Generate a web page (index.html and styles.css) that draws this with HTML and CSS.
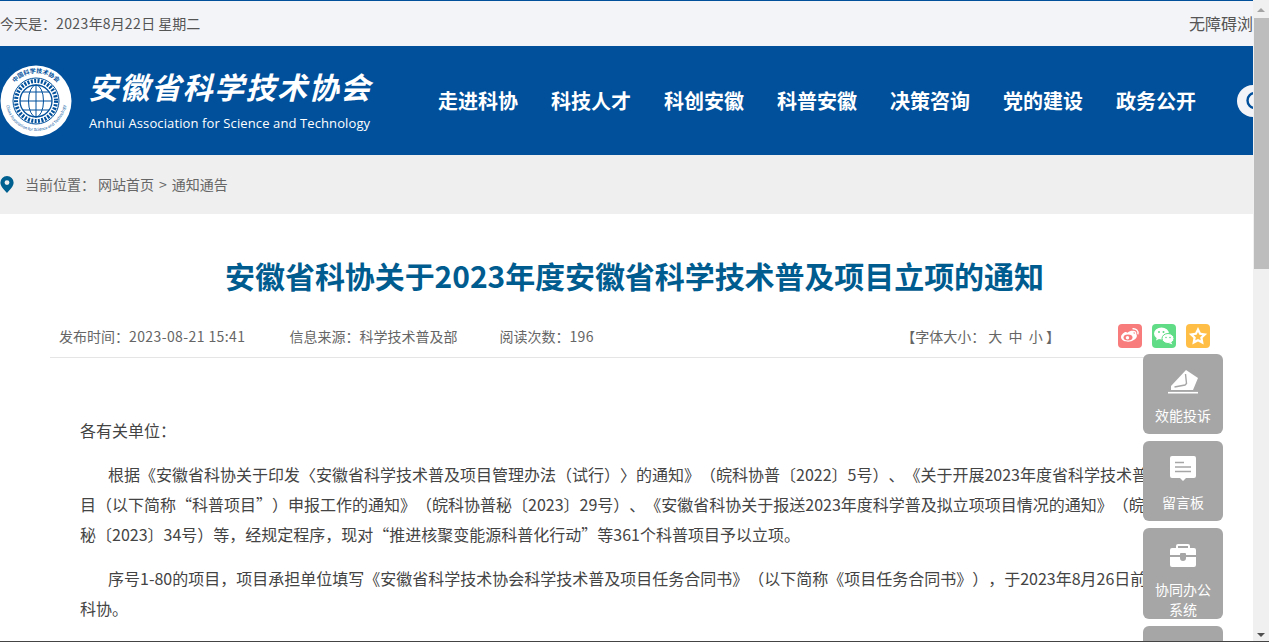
FILE: index.html
```html
<!DOCTYPE html>
<html lang="zh-CN">
<head>
<meta charset="utf-8">
<title>安徽省科协关于2023年度安徽省科学技术普及项目立项的通知</title>
<link rel="stylesheet" href="styles.css">
</head>
<body>
<div class="window">
  <div class="page">
    <div class="topbar">
      <span class="date">今天是：<span class="num">2023</span>年<span class="num">8</span>月<span class="num">22</span>日 星期二</span>
      <span class="access">无障碍浏览</span>
    </div>
    <header class="header">
      <div class="brand">
        <svg class="emblem" width="72" height="72" viewBox="0 0 72 72">
          <circle cx="36" cy="36" r="35.5" fill="#fff"/>
          <circle cx="36" cy="36" r="23" fill="none" stroke="#00509c" stroke-width="1"/>
          <circle cx="36" cy="36" r="20" fill="none" stroke="#00509c" stroke-width="4" stroke-dasharray="2 1.4"/>
          <circle cx="36" cy="36" r="16" fill="#fff" stroke="#00509c" stroke-width="1.3"/>
          <ellipse cx="36" cy="36" rx="7.5" ry="16" fill="none" stroke="#00509c"/>
          <path d="M36 20v32M20 36h32M23 27h26M23 45h26" stroke="#00509c" fill="none"/>
          <path id="ringtop" d="M8 36a28 28 0 0 1 56 0" fill="none"/>
          <text class="emblem-cn"><textPath href="#ringtop" startOffset="50%" text-anchor="middle">中国科学技术协会</textPath></text>
          <path id="ringbot" d="M6 36a30 30 0 0 0 60 0" fill="none"/>
          <text class="emblem-en"><textPath href="#ringbot" startOffset="50%" text-anchor="middle">China Association for Science and Technology</textPath></text>
        </svg>
        <div class="brand-text">
          <div class="brand-cn">安徽省科学技术协会</div>
          <div class="brand-en">Anhui Association for Science and Technology</div>
        </div>
      </div>
      <nav class="nav">
        <a>走进科协</a><a>科技人才</a><a>科创安徽</a><a>科普安徽</a><a>决策咨询</a><a>党的建设</a><a>政务公开</a>
      </nav>
      <div class="search">
        <svg width="46" height="32" viewBox="0 0 46 32"><circle cx="16" cy="16" r="16" fill="#f3f4f8"/><circle cx="18" cy="15.500" r="7.500" fill="none" stroke="#00509c" stroke-width="2.400"/></svg>
      </div>
    </header>
    <div class="crumbs">
      <svg class="pin" width="14" height="17" viewBox="0 0 14 18"><path fill-rule="evenodd" fill="#00608f" d="M7 0a7 7 0 0 1 7 7c0 4-4 8-7 11C4 15 0 11 0 7a7 7 0 0 1 7-7zm0 4.400a2.600 2.600 0 1 0 0 5.200 2.600 2.600 0 0 0 0-5.200z"/></svg>
      <span class="crumb-label">当前位置：</span>
      <span>网站首页</span><span class="sep">&gt;</span><span>通知通告</span>
    </div>
    <main class="article">
      <h1 class="title">安徽省科协关于2023年度安徽省科学技术普及项目立项的通知</h1>
      <div class="meta">
        <span class="meta-a">发布时间：<span class="num-wide">2023-08-21 15:41</span></span>
        <span class="meta-b">信息来源：科学技术普及部</span>
        <span class="meta-c">阅读次数：<span class="num-wide">196</span></span>
        <span class="fontsize">【字体大小：&nbsp;大&nbsp;&nbsp;中&nbsp;&nbsp;小&nbsp;】</span>
        <span class="shares">
          <span class="share weibo"><svg width="24" height="24" viewBox="0 0 24 24"><path fill="#fff" d="M9.500 8.700c2.900-2.200 5.900-2.600 6.200-.8.100.6 0 1.200-.2 1.600 1.700-.3 3.400.5 3.400 2.300 0 3.100-4.300 5.900-8.800 5.900-3.700 0-7.100-1.700-7.100-4.700 0-1.500 1.200-3.300 3.300-4.500 1.100-.7 2.200-.6 3.200.2z"/><ellipse cx="10" cy="13.500" rx="4.500" ry="3" fill="#f87c7c"/><circle cx="9.500" cy="13.700" r="1.700" fill="#fff"/><path fill="none" stroke="#fff" stroke-width="1.400" d="M14.500 4.800c3.300-.6 6.300 2 5.400 5.500M15 7.400c1.700-.3 3.100 1.100 2.600 2.800"/></svg></span>
          <span class="share wechat"><svg width="24" height="24" viewBox="0 0 24 24"><ellipse cx="9.500" cy="9.500" rx="7.500" ry="6" fill="#fff"/><path fill="#fff" d="M5 13l-1 3.500L8 14.500z"/><ellipse cx="16" cy="14.500" rx="6" ry="5" fill="#fff" stroke="#5fdc85"/><path fill="#fff" d="M19 18l1.500 2.500-4-1.500z"/><circle cx="7" cy="8" r="1" fill="#5fdc85"/><circle cx="11.500" cy="8" r="1" fill="#5fdc85"/><circle cx="14" cy="13.500" r=".8" fill="#5fdc85"/><circle cx="18" cy="13.500" r=".8" fill="#5fdc85"/></svg></span>
          <span class="share star"><svg width="24" height="24" viewBox="0 0 24 24"><path fill="#fff" d="M12 3l2.800 5.800 6.400.9-4.600 4.400 1.100 6.400-5.700-3-5.700 3 1.100-6.400-4.600-4.400 6.400-.9z"/><path fill="#ffbf47" d="M12 8l1.400 2.700 3 .5-2.200 2.100.5 3-2.700-1.400-2.700 1.400.5-3-2.200-2.100 3-.5z"/></svg></span>
        </span>
      </div>
      <div class="body">
        <p class="salute">各有关单位：</p>
        <p class="para"><span class="line first">根据《安徽省科协关于印发〈安徽省科学技术普及项目管理办法（试行）〉的通知》（皖科协普〔2022〕5号）、《关于开展2023年度省科学技术普及项</span><span class="line">目（以下简称“科普项目”）申报工作的通知》（皖科协普秘〔2023〕29号）、《安徽省科协关于报送2023年度科学普及拟立项项目情况的通知》（皖科协普</span><span class="line">秘〔2023〕34号）等，经规定程序，现对“推进核聚变能源科普化行动”等361个科普项目予以立项。</span></p>
        <p class="para"><span class="line first">序号1-80的项目，项目承担单位填写《安徽省科学技术协会科学技术普及项目任务合同书》（以下简称《项目任务合同书》），于2023年8月26日前报省</span><span class="line">科协。</span></p>
      </div>
    </main>
    <aside class="float">
      <a class="float-item">
        <svg class="ico" width="30" height="28" viewBox="0 0 30 28"><path fill="#fff" d="M3 17L18 1l12 8-5 12H3z"/><path fill="none" stroke="#a6a6a6" stroke-width="1.400" d="M17.500 5l1 9.500-1.500 1.500-10.500 2"/><path stroke="#fff" stroke-width="1.600" d="M0 23.700h30"/></svg>
        <span class="float-text">效能投诉</span>
      </a>
      <a class="float-item">
        <svg class="ico" width="28" height="28" viewBox="0 0 28 28"><path fill="#fff" d="M3 0h22a2 2 0 0 1 2 2v18a2 2 0 0 1-2 2h-8l-3 3-3-3H3a2 2 0 0 1-2-2V2a2 2 0 0 1 2-2z"/><path stroke="#a6a6a6" stroke-width="1.700" d="M6 6.500h9M6 11h16M6 15.500h16"/></svg>
        <span class="float-text">留言板</span>
      </a>
      <a class="float-item">
        <svg class="ico" width="26" height="28" viewBox="0 0 26 28"><path fill="#fff" d="M8 1h10a2 2 0 0 1 2 2v2h4a2 2 0 0 1 2 2v5H16v-1a1 1 0 0 0-1-1h-4a1 1 0 0 0-1 1v1H0V7a2 2 0 0 1 2-2h4V3a2 2 0 0 1 2-2zm0 2v2h10V3zM0 14h10v1a3 3 0 0 0 6 0v-1h10v8a2 2 0 0 1-2 2H2a2 2 0 0 1-2-2z"/></svg>
        <span class="float-text">协同办公系统</span>
      </a>
      <a class="float-item"></a>
    </aside>
  </div>
  <div class="scrollbar">
    <span class="arrow up"></span>
    <span class="thumb"></span>
    <span class="track"></span>
    <span class="arrow down"></span>
  </div>
</div>
</body>
</html>
```
FILE: styles.css
```css
* { box-sizing: border-box; }
html, body { margin: 0; height: 100%; overflow: hidden; }
body { font-family: "Noto Sans CJK SC", "Noto Sans", sans-serif; color: #333; background: #fff; text-spacing-trim: space-all; }
.window { display: flex; width: 1269px; height: 642px; border-bottom: 1px solid #444; overflow: hidden; }
.page { position: relative; width: 1253px; flex: none; height: 641px; overflow: hidden; }

.topbar { height: 46px; background: #f3f4f8; border-top: 1px solid #00509c; display: flex; justify-content: space-between; align-items: center; padding-bottom: 1px; font-size: 14px; color: #555; white-space: nowrap; overflow: hidden; }
.num { letter-spacing: .4px; }
.access { font-size: 16px; margin-right: -16px; }

.header { height: 109px; background: #00509c; display: flex; align-items: center; overflow: hidden; }
.brand { display: flex; width: 438px; flex: none; align-items: center; }
.emblem { flex: none; }
.emblem-cn { font-size: 6px; fill: #00509c; font-weight: 700; }
.emblem-en { font-size: 4px; fill: #00509c; }
.brand-text { margin-left: 17px; padding-bottom: 4px; color: #fff; }
.brand-cn { font-size: 30px; line-height: 40px; font-weight: 700; font-style: italic; letter-spacing: 1.500px; white-space: nowrap; width: 286px; margin-left: -1px; }
.brand-en { font-size: 13px; letter-spacing: .11px; line-height: 18px; font-family: "Open Sans", sans-serif; white-space: nowrap; margin-top: 8px; }
.nav { display: flex; gap: 33px; flex: none; }
.nav a { font-size: 20px; font-weight: 700; color: #fff; white-space: nowrap; }
.search { margin-left: 41px; flex: none; height: 32px; }

.crumbs { height: 59px; background: #efefef; display: flex; align-items: center; padding-bottom: 1px; font-size: 14px; color: #666; white-space: nowrap; }
.pin { margin-right: 11px; flex: none; }
.crumb-label { margin-right: 3px; }
.sep { margin: 0 5px; }

.article { padding: 0 0 0 50px; }
.title { margin: 38px 0 0; text-align: center; font-size: 30px; letter-spacing: -.07px; line-height: 46px; font-weight: 700; color: #005b8f; width: 1169px; white-space: nowrap; }
.meta { display: flex; align-items: center; width: 1153px; height: 40px; margin-top: 17px; padding: 1px 0 1px 9px; font-size: 14px; color: #666; border-bottom: 1px solid #e5e5e5; white-space: nowrap; box-sizing: content-box; }
.num-wide { letter-spacing: .4px; }
.meta-b { margin-left: 44px; }
.meta-c { margin-left: 42px; }
.fontsize { margin-left: auto; margin-right: 58px; }
.shares { display: flex; gap: 10px; margin-right: 2px; }
.share { width: 24px; height: 24px; border-radius: 4px; display: block; }
.share svg { display: block; }
.weibo { background: #f87c7c; }
.wechat { background: #5fdc85; }
.star { background: #ffbf47; }

.body { padding: 57px 0 0 30px; font-size: 16px; line-height: 30px; color: #444; white-space: nowrap; }
.body p { margin: 0; }
.body .salute { margin-bottom: 14px; }
.body .para { margin-bottom: 14px; }
.line { display: block; }
.first { text-indent: 28px; }

.float { position: absolute; left: 1143px; top: 354px; width: 80px; display: flex; flex-direction: column; gap: 7px; }
.float-item { display: flex; flex: none; flex-direction: column; align-items: center; width: 80px; height: 80px; border-radius: 6px; background: #a6a6a6; color: #fff; padding-top: 15px; }
.float-item:nth-child(3) { height: 91px; }
.ico { flex: none; }
.float-text { font-size: 14px; line-height: 20px; text-align: center; width: 60px; margin-top: 8px; }

.scrollbar { width: 16px; flex: none; background: #f0f0f0; display: flex; flex-direction: column; align-items: center; }
.arrow { width: 0; height: 0; border-left: 4px solid transparent; border-right: 4px solid transparent; flex: none; }
.arrow.up { border-bottom: 4px solid #a3a3a3; margin: 8px 0 6px; }
.arrow.down { border-top: 4px solid #505050; margin: 6px 0 4px; }
.thumb { width: 15px; height: 251px; background: #bdbdbd; flex: none; margin-left: 1px; }
.track { flex: 1; }
```
